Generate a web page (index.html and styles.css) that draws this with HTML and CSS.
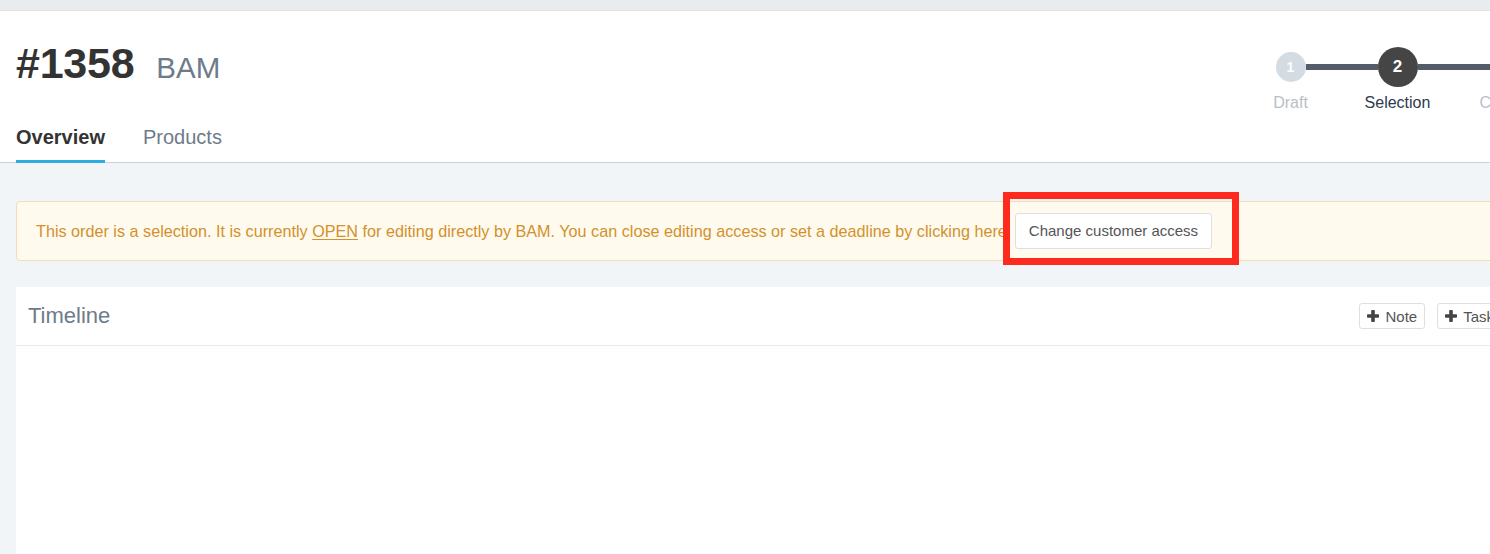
FILE: index.html
```html
<!DOCTYPE html>
<html lang="en">
<head>
<meta charset="utf-8">
<title>#1358 BAM</title>
<link rel="stylesheet" href="styles.css">
</head>
<body>
<div class="topbar"></div>
<div class="page">
  <header class="order-header">
    <div class="header-top">
      <h1 class="order-title"><span class="order-no">#1358</span><span class="order-customer">BAM</span></h1>
      <ol class="stepper">
        <li class="step done">
          <div class="step-track"><span class="step-line hidden"></span><span class="step-dot">1</span><span class="step-line"></span></div>
          <span class="step-label">Draft</span>
        </li>
        <li class="step active">
          <div class="step-track"><span class="step-line"></span><span class="step-dot">2</span><span class="step-line"></span></div>
          <span class="step-label">Selection</span>
        </li>
        <li class="step">
          <div class="step-track"><span class="step-line"></span><span class="step-dot">3</span><span class="step-line hidden"></span></div>
          <span class="step-label">Closed</span>
        </li>
      </ol>
    </div>
    <nav class="tabs">
      <a class="tab current" href="#">Overview</a>
      <a class="tab" href="#">Products</a>
    </nav>
  </header>

  <main class="content">
    <div class="alert">
      <span class="alert-text">This order is a selection. It is currently <u>OPEN</u> for editing directly by BAM. You can close editing access or set a deadline by clicking here</span>
      <span class="highlight"><button class="btn btn-access" type="button">Change customer access</button></span>
    </div>

    <section class="card">
      <div class="card-head">
        <h2 class="card-title">Timeline</h2>
        <div class="card-actions">
          <button class="btn btn-sm" type="button"><svg class="plus" viewBox="0 0 12 12" width="12" height="12"><rect x="4.2" y="0" width="3.6" height="12" rx="0.8"/><rect x="0" y="4.2" width="12" height="3.6" rx="0.8"/></svg>Note</button>
          <button class="btn btn-sm" type="button"><svg class="plus" viewBox="0 0 12 12" width="12" height="12"><rect x="4.2" y="0" width="3.6" height="12" rx="0.8"/><rect x="0" y="4.2" width="12" height="3.6" rx="0.8"/></svg>Task</button>
        </div>
      </div>
      <div class="card-body"></div>
    </section>
  </main>
</div>
</body>
</html>
```

FILE: styles.css
```css
*, *::before, *::after { box-sizing: border-box; }

html, body {
  margin: 0;
  padding: 0;
  overflow: hidden;
  background: #f2f5f8;
  font-family: "Liberation Sans", Arial, sans-serif;
}

.topbar {
  height: 11px;
  background: #e9ecef;
  border-bottom: 1px solid #dfe3e7;
}

.page {
  width: 1574px;
}

/* header */
.order-header {
  background: #fff;
  border-bottom: 1px solid #c7d2dc;
  padding: 31px 16px 0;
}

.header-top {
  display: flex;
  align-items: flex-start;
  justify-content: space-between;
  height: 71px;
}

.order-title {
  margin: 0;
  display: flex;
  align-items: baseline;
  line-height: 42px;
}

.order-no {
  font-size: 43px;
  font-weight: 700;
  color: #333;
  letter-spacing: -0.25px;
}

.order-customer {
  margin-left: 22px;
  font-size: 29.5px;
  font-weight: 400;
  color: #6d7b8a;
}

/* progress steps */
.stepper {
  list-style: none;
  margin: 5px 0 0;
  padding: 0;
  display: flex;
}

.step {
  width: 107px;
  display: flex;
  flex-direction: column;
  align-items: center;
}

.step-track {
  width: 100%;
  height: 40px;
  display: flex;
  align-items: center;
}

.step-line {
  flex: 1;
  height: 6px;
  background: #535d69;
}

.step-line.hidden { background: transparent; }

.step-dot {
  width: 30px;
  height: 30px;
  border-radius: 50%;
  background: #d3dce2;
  color: #fff;
  font-size: 14px;
  font-weight: 700;
  display: flex;
  align-items: center;
  justify-content: center;
  flex-shrink: 0;
}

.step.active .step-dot {
  width: 40px;
  height: 40px;
  background: #454545;
  font-size: 17px;
}

.step-label {
  margin-top: 6px;
  font-size: 16px;
  line-height: 20px;
  color: #b7c0c8;
}

.step.active .step-label { color: #2c3a4b; }

/* tabs */
.tabs {
  display: flex;
  gap: 38px;
  margin-top: 12px;
}

.tab {
  font-size: 20px;
  line-height: 24px;
  padding-bottom: 11px;
  border-bottom: 3px solid transparent;
  color: #6d7b8a;
  text-decoration: none;
  margin-bottom: -1px;
}

.tab.current {
  font-weight: 700;
  color: #333;
  border-bottom-color: #2eaee0;
}

/* content */
.content {
  padding: 38px 16px 0;
}

.alert {
  display: flex;
  align-items: center;
  background: #fffaee;
  border: 1px solid #f1dfb3;
  border-radius: 4px;
  padding: 11px 19px;
  color: #d2912c;
  font-size: 16.2px;
  line-height: 20px;
}

.alert-text u { text-underline-offset: 2px; }

.highlight {
  position: relative;
  margin-left: 8px;
}

/* annotation frame around the access button */
.highlight::after {
  content: "";
  position: absolute;
  left: -12px;
  top: -21px;
  width: 236px;
  height: 73px;
  border: 7px solid #ff2a1e;
  pointer-events: none;
}

.btn {
  font-family: inherit;
  background: #fff;
  border: 1px solid #dcdfe3;
  border-radius: 3px;
  color: #555;
  cursor: pointer;
}

.btn-access {
  font-size: 15px;
  line-height: 20px;
  padding: 7px 13px;
  display: block;
}

.card {
  margin-top: 26px;
  background: #fff;
  min-height: 300px;
}

.card-head {
  height: 59px;
  display: flex;
  align-items: center;
  justify-content: space-between;
  padding: 0 56px 0 12px;
  border-bottom: 1px solid #e7eaed;
}

.card-title {
  margin: 0;
  font-size: 22px;
  font-weight: 400;
  color: #6d7b8a;
}

.card-actions {
  display: flex;
  gap: 12px;
}

.btn-sm {
  display: flex;
  align-items: center;
  gap: 6px;
  height: 26px;
  padding: 0 7px;
  font-size: 15px;
  color: #555;
}

.plus { fill: #454545; }
```
